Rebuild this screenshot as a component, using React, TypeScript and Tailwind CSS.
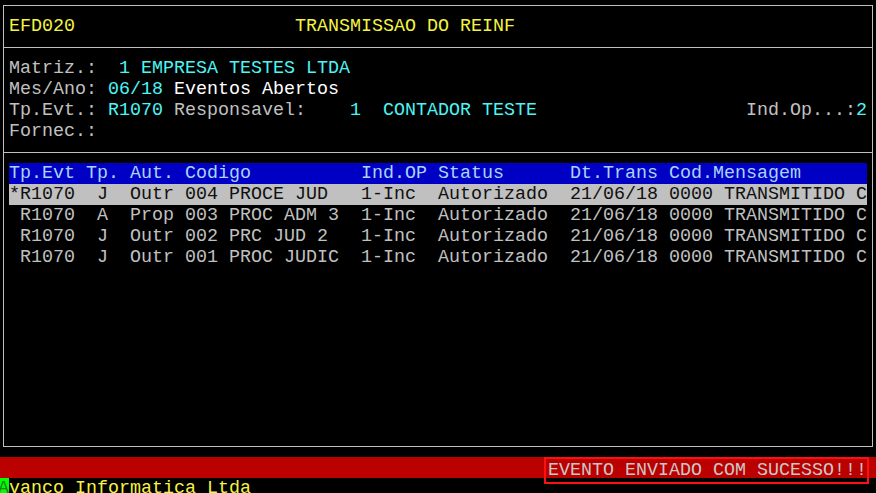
import React from 'react';

// terminal grid: 11px per column, 21px per row
const CELL = 'h-[21px] leading-[21px] whitespace-pre';

type Seg = { t: string; c?: string };

const Line: React.FC<{ segs: Seg[]; className?: string }> = ({ segs, className = '' }) => (
  <div className={`${CELL} pl-[5px] ${className}`}>
    {segs.map((s, i) => (
      <span key={i} className={s.c ?? 'text-[#c0c0c0]'}>
        {s.t}
      </span>
    ))}
  </div>
);

const Separator = () => (
  <div className="h-[21px] flex items-center">
    <div className="h-px w-full bg-[#c0c0c0]" />
  </div>
);

const rows = [
  { sel: true, text: '*R1070  J  Outr 004 PROCE JUD   1-Inc  Autorizado  21/06/18 0000 TRANSMITIDO C' },
  { sel: false, text: ' R1070  A  Prop 003 PROC ADM 3  1-Inc  Autorizado  21/06/18 0000 TRANSMITIDO C' },
  { sel: false, text: ' R1070  J  Outr 002 PRC JUD 2   1-Inc  Autorizado  21/06/18 0000 TRANSMITIDO C' },
  { sel: false, text: ' R1070  J  Outr 001 PROC JUDIC  1-Inc  Autorizado  21/06/18 0000 TRANSMITIDO C' },
];

const cyan = 'text-[#4cf4f4]';
const yellow = 'text-[#f4f440]';

export default function App() {
  return (
    <div
      className="w-[876px] h-[493px] bg-black overflow-hidden text-[18.33px] text-[#c0c0c0]"
      style={{ fontFamily: '"Liberation Mono", "Courier New", monospace' }}
    >
      {/* main box */}
      <div className="mt-[5px] ml-[3px] w-[870px] h-[442px] border border-[#c0c0c0] pt-[10px]">
        <Line
          segs={[
            { t: 'EFD020', c: yellow },
            { t: '                    ' },
            { t: 'TRANSMISSAO DO REINF', c: yellow },
          ]}
        />
        <Separator />
        <Line segs={[{ t: 'Matriz.:  ' }, { t: '1 EMPRESA TESTES LTDA', c: cyan }]} />
        <Line
          segs={[
            { t: 'Mes/Ano: ' },
            { t: '06/18', c: cyan },
            { t: ' ' },
            { t: 'Eventos Abertos', c: 'text-white' },
          ]}
        />
        <Line
          segs={[
            { t: 'Tp.Evt.: ' },
            { t: 'R1070', c: cyan },
            { t: ' Responsavel:    ' },
            { t: '1  CONTADOR TESTE', c: cyan },
            { t: '                   Ind.Op...:' },
            { t: '2', c: cyan },
          ]}
        />
        <Line segs={[{ t: 'Fornec.:' }]} />
        <Separator />

        {/* table */}
        <div className="ml-[5px] w-[858px]">
          <div className={`${CELL} bg-[#0000c4] text-[#a8d4f8]`}>
            {'Tp.Evt Tp. Aut. Codigo          Ind.OP Status      Dt.Trans Cod.Mensagem'}
          </div>
          {rows.map((r, i) => (
            <div
              key={i}
              className={`${CELL} ${r.sel ? 'bg-[#c0c0c0] text-[#101010]' : 'text-[#c0c0c0]'}`}
            >
              {r.text}
            </div>
          ))}
        </div>
      </div>

      {/* status bar */}
      <div className="mt-[10px] h-[21px] bg-[#bb0000] pl-[548px]">
        <div className="relative inline-block">
          <span className={`${CELL} block text-[#c8c8c8]`}>EVENTO ENVIADO COM SUCESSO!!!</span>
          <div className="absolute left-[-4px] right-[-2px] top-[-3px] bottom-[-3px] border-2 border-[#ff1010]" />
        </div>
      </div>

      {/* bottom line */}
      <div className={`${CELL} -ml-[2px] flex ${yellow}`}>
        <span className="inline-block w-[11px] h-[21px] bg-[#00ff00] text-[#208020]">A</span>
        <span>vanco Informatica Ltda</span>
      </div>
    </div>
  );
}
